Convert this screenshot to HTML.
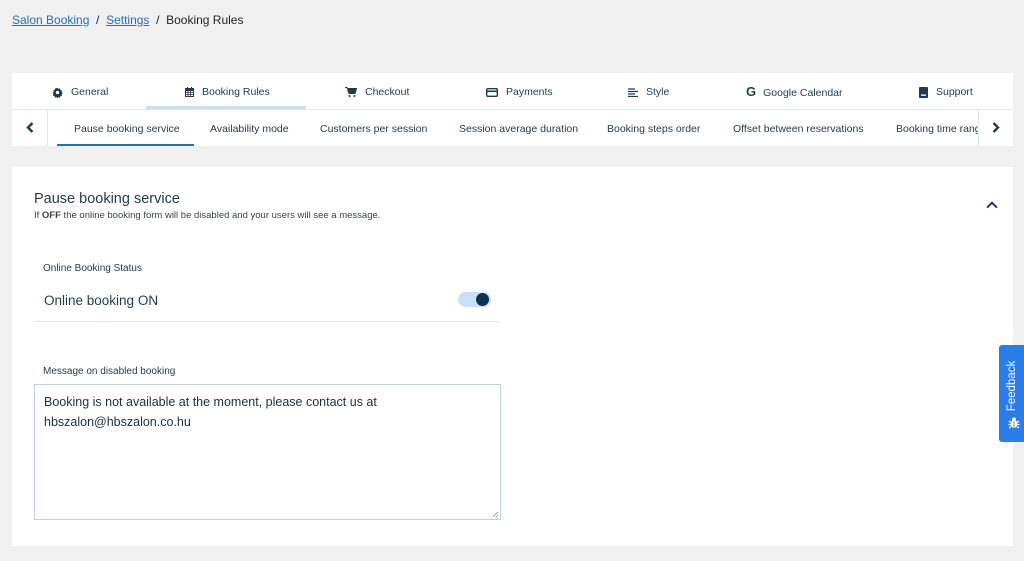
<!DOCTYPE html>
<html><head><style>
body{margin:0;width:1024px;height:561px;background:#f0f0f1;font-family:"Liberation Sans",sans-serif;color:#1d3b53;position:relative;overflow:hidden}
.a{position:absolute}
.bc{top:13px;left:12px;font-size:12px;color:#1d2327}
.bc a{color:#2271b1;text-decoration:underline}
.panel{left:12px;width:1001px;background:#fff}
.t{font-size:10.5px;color:#1d3b53;white-space:nowrap}
.ic{display:inline-block;vertical-align:middle;margin-right:8px}
</style></head><body>
<div class="a bc"><a>Salon Booking</a>&nbsp; / &nbsp;<a>Settings</a>&nbsp; / &nbsp;Booking Rules</div>

<div class="a panel" style="top:73px;height:73px"></div>
<div class="a" style="left:12px;top:109px;width:1001px;height:1px;background:#dde9f3"></div>
<div class="a" style="left:146px;top:106px;width:160px;height:3px;background:#c9e0f4"></div>
<div class="a" style="left:47px;top:110px;width:1px;height:36px;background:#dde9f3"></div>
<div class="a" style="left:978px;top:110px;width:1px;height:36px;background:#dde9f3"></div>
<div class="a" style="left:57px;top:144px;width:137px;height:2px;background:#2271b1"></div>

<div class="a t" style="left:52px;top:86px"><svg class="ic" width="11" height="11" viewBox="0 0 12 12"><path d="M6 0.5l1 1.6 1.8-.6.4 1.9 1.9.4-.6 1.8 1.6 1-1.6 1 .6 1.8-1.9.4-.4 1.9-1.8-.6-1 1.6-1-1.6-1.8.6-.4-1.9-1.9-.4.6-1.8L.5 6l1.6-1-.6-1.8 1.9-.4.4-1.9 1.8.6z" fill="#1d3b53"/><circle cx="6" cy="6" r="1.8" fill="#fff"/></svg>General</div>
<div class="a t" style="left:185px;top:86px"><svg class="ic" width="9" height="10" viewBox="0 0 9 10"><rect x="0" y="1" width="9" height="9" fill="#1d3b53"/><rect x="1" y="4" width="7" height="5" fill="#fff"/><path d="M1 5.5h7M1 7.5h7M3 4v5M5.5 4v5" stroke="#1d3b53" stroke-width=".8"/><rect x="2" y="0" width="1" height="2" fill="#1d3b53"/><rect x="6" y="0" width="1" height="2" fill="#1d3b53"/></svg>Booking Rules</div>
<div class="a t" style="left:345px;top:86px"><svg class="ic" width="12" height="10" viewBox="0 0 12 10"><path d="M0 0.5h2l2 6h6l1.5-5H3" fill="#1d3b53" stroke="#1d3b53"/><circle cx="4.5" cy="9" r="1" fill="#1d3b53"/><circle cx="9.5" cy="9" r="1" fill="#1d3b53"/></svg>Checkout</div>
<div class="a t" style="left:486px;top:86px"><svg class="ic" width="12" height="9" viewBox="0 0 12 9"><rect x=".7" y=".7" width="10.6" height="7.6" rx="1" fill="none" stroke="#1d3b53" stroke-width="1.4"/><rect x="1" y="2.5" width="10" height="1.6" fill="#1d3b53"/></svg>Payments</div>
<div class="a t" style="left:628px;top:86px"><svg class="ic" width="10" height="9" viewBox="0 0 10 9"><path d="M0 1h7M0 3.5h10M0 6h7M0 8.5h10" stroke="#1d3b53" stroke-width="1.3"/></svg>Style</div>
<div class="a t" style="left:746px;top:84px"><span style="font-weight:bold;font-size:13px;margin-right:7px">G</span>Google Calendar</div>
<div class="a t" style="left:919px;top:86px"><svg class="ic" width="9" height="11" viewBox="0 0 9 11"><rect x="0" y="0" width="9" height="11" rx="1" fill="#1d3b53"/><rect x="2" y="7.5" width="5" height="1.3" fill="#fff"/></svg>Support</div>

<svg class="a" style="left:26px;top:122px" width="8" height="11" viewBox="0 0 8 11"><path d="M6.5 1L2 5.5 6.5 10" fill="none" stroke="#1d3b53" stroke-width="2.4"/></svg>
<svg class="a" style="left:992px;top:122px" width="8" height="11" viewBox="0 0 8 11"><path d="M1.5 1L6 5.5 1.5 10" fill="none" stroke="#1d3b53" stroke-width="2.4"/></svg>
<div class="a t" style="left:74px;top:123px">Pause booking service</div>
<div class="a t" style="left:210px;top:123px">Availability mode</div>
<div class="a t" style="left:320px;top:123px">Customers per session</div>
<div class="a t" style="left:459px;top:123px">Session average duration</div>
<div class="a t" style="left:607px;top:123px">Booking steps order</div>
<div class="a t" style="left:733px;top:123px">Offset between reservations</div>
<div class="a t" style="left:896px;top:123px;width:82px;overflow:hidden">Booking time range</div>

<div class="a panel" style="top:167px;height:379px"></div>
<div class="a" style="left:34px;top:191px;font-size:14.5px;color:#1d3b53">Pause booking service</div>
<div class="a" style="left:34px;top:210px;font-size:9.5px;color:#3c434a">If <b>OFF</b> the online booking form will be disabled and your users will see a message.</div>
<div class="a" style="left:988px;top:203px;width:6px;height:6px;border-left:2px solid #1d3b53;border-top:2px solid #1d3b53;transform:rotate(45deg)"></div>
<div class="a" style="left:43px;top:263px;font-size:10px">Online Booking Status</div>
<div class="a" style="left:44px;top:293px;font-size:13.5px">Online booking ON</div>
<div class="a" style="left:458px;top:292px;width:33px;height:15px;border-radius:8px;background:#c9e0f4"></div>
<div class="a" style="left:476px;top:293px;width:13px;height:13px;border-radius:50%;background:#0d3354"></div>
<div class="a" style="left:34px;top:321px;width:467px;height:1px;background:#dde9f3"></div>
<div class="a" style="left:43px;top:366px;font-size:10px">Message on disabled booking</div>
<div class="a" style="left:34px;top:384px;width:465px;height:134px;border:1px solid #b8d4ec;background:#fff"></div>
<div class="a" style="left:44px;top:392px;font-size:12.5px;line-height:20px;color:#1d2f3f">Booking is not available at the moment, please contact us at<br>hbszalon@hbszalon.co.hu</div>
<svg class="a" style="left:492px;top:511px" width="7" height="7"><path d="M1 6L6 1M4 6L6 4" stroke="#888" stroke-width=".8"/></svg>

<div class="a" style="left:999px;top:345px;width:26px;height:97px;background:#2b7de9;border-radius:3px 0 0 3px"></div>
<div class="a" style="left:979px;top:379px;width:66px;height:14px;transform:rotate(-90deg);color:#fff;font-size:11.5px;text-align:center;line-height:14px">Feedback</div>
<svg class="a" style="left:1008px;top:417px" width="12" height="12" viewBox="0 0 12 12"><ellipse cx="6" cy="7" rx="3.2" ry="4" fill="#fff"/><circle cx="6" cy="2.5" r="2" fill="#fff"/><path d="M1 4l2 1.5M11 4l-2 1.5M0.5 7.5h2.5M11.5 7.5H9M1 11l2-1.5M11 11l-2-1.5" stroke="#fff" stroke-width="1.2"/><path d="M6 4v7" stroke="#2b7de9" stroke-width=".8"/></svg>
</body></html>
